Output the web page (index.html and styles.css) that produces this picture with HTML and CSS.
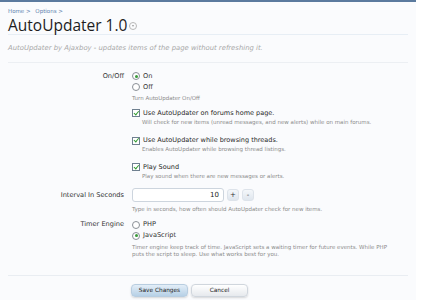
FILE: index.html
```html
<!DOCTYPE html>
<html lang="en">
<head>
    <meta charset="UTF-8">
    <title>AutoUpdater 1.0</title>
    <link rel="stylesheet" href="styles.css">
</head>
<body>
    <div class="page">
        <div class="topbar"></div>
        <div class="content">
            <div class="breadcrumb">
                <span>Home &gt;</span>
                <span>Options &gt;</span>
            </div>
            <h1>AutoUpdater 1.0<span class="menu-arrow"></span></h1>
            <p class="description">AutoUpdater by Ajaxboy - updates items of the page without refreshing it.</p>

            <form class="options">
                <div class="row first-row">
                    <div class="row-label">On/Off</div>
                    <div class="row-controls">
                        <label class="choice"><span class="radio checked"></span>On</label>
                        <label class="choice"><span class="radio"></span>Off</label>
                        <p class="hint">Turn AutoUpdater On/Off</p>
                        <label class="check-choice c1"><span class="checkbox"></span>Use AutoUpdater on forums home page.</label>
                        <p class="hint indent">Will check for new items (unread messages, and new alerts) while on main forums.</p>
                        <label class="check-choice c2"><span class="checkbox"></span>Use AutoUpdater while browsing threads.</label>
                        <p class="hint indent">Enables AutoUpdater while browsing thread listings.</p>
                        <label class="check-choice c3"><span class="checkbox"></span>Play Sound</label>
                        <p class="hint indent">Play sound when there are new messages or alerts.</p>
                    </div>
                </div>

                <div class="row interval-row">
                    <div class="row-label">Interval In Seconds</div>
                    <div class="row-controls">
                        <div class="spinner">
                            <div class="number-box">10</div>
                            <button type="button" class="spin-btn">+</button>
                            <button type="button" class="spin-btn">-</button>
                        </div>
                        <p class="hint">Type in seconds, how often should AutoUpdater check for new items.</p>
                    </div>
                </div>

                <div class="row timer-row">
                    <div class="row-label">Timer Engine</div>
                    <div class="row-controls">
                        <label class="choice"><span class="radio"></span>PHP</label>
                        <label class="choice"><span class="radio checked"></span>JavaScript</label>
                        <p class="hint">Timer engine keep track of time. JavaScript sets a waiting timer for future events. While PHP puts the script to sleep. Use what works best for you.</p>
                    </div>
                </div>

                <div class="submit-row">
                    <button type="button" class="btn primary">Save Changes</button>
                    <button type="button" class="btn">Cancel</button>
                </div>
            </form>
        </div>
    </div>
</body>
</html>
```

FILE: styles.css
```css
body {
    margin: 0;
    background: #ffffff;
    font-family: "DejaVu Sans", Verdana, sans-serif;
    color: #333;
}
.page {
    width: 416px;
    height: 300px;
    background: #fafbfd;
}
.topbar {
    height: 2px;
    background: #5b7a9e;
}
.content {
    padding: 0 8px;
}
.breadcrumb {
    padding-top: 5px;
    height: 8px;
    font-size: 5.5px;
    line-height: 8px;
    color: #5d82ae;
}
.breadcrumb span {
    margin-right: 3px;
}
h1 {
    margin: 1px 0 0;
    padding: 0;
    height: 18px;
    font-family: "Open Sans", "Liberation Sans", sans-serif;
    font-weight: normal;
    font-size: 15.5px;
    line-height: 18px;
    color: #1d1d1d;
    border-bottom: 1px solid #e7eef5;
}
.menu-arrow {
    display: inline-block;
    width: 6px;
    height: 6px;
    margin-left: 2px;
    border: 1px solid #b8b8b8;
    border-radius: 50%;
    position: relative;
    vertical-align: 1px;
}
.menu-arrow::after {
    content: "";
    position: absolute;
    left: 1.5px;
    top: 2px;
    border-left: 1.5px solid transparent;
    border-right: 1.5px solid transparent;
    border-top: 2px solid #9a9a9a;
}
.description {
    margin: 0;
    padding: 8.5px 0 10.5px;
    font-size: 6.85px;
    line-height: 8px;
    font-style: italic;
    color: #a9a9a9;
    border-bottom: 1px solid #eceff3;
}
.options {
    margin: 0;
}
.row {
    display: grid;
    grid-template-columns: 116px 1fr;
    column-gap: 8px;
}
.row-label {
    text-align: right;
    font-size: 6.6px;
    line-height: 11px;
    color: #333;
}
.row-controls {
    display: flex;
    flex-direction: column;
    align-items: flex-start;
}
.first-row {
    padding-top: 7.5px;
}
.choice {
    display: flex;
    align-items: center;
    height: 11px;
    font-size: 6.6px;
    line-height: 11px;
    color: #333;
}
.check-choice {
    display: flex;
    align-items: center;
    height: 9px;
    font-size: 6.5px;
    line-height: 9px;
    color: #1f1f1f;
}
.c1 {
    margin-top: 6.5px;
}
.c2 {
    margin-top: 10.5px;
}
.c3 {
    margin-top: 9.5px;
}
.radio {
    width: 6px;
    height: 6px;
    border: 1px solid #8a8f96;
    border-radius: 50%;
    margin-right: 3px;
    background: #fff;
    display: flex;
    align-items: center;
    justify-content: center;
}
.radio.checked::after {
    content: "";
    width: 3px;
    height: 3px;
    border-radius: 50%;
    background: #3a9a3a;
}
.checkbox {
    width: 6px;
    height: 6px;
    border: 1px solid #6f8090;
    margin-right: 3px;
    background: #fff;
    position: relative;
}
.checkbox::after {
    content: "";
    position: absolute;
    left: 1.6px;
    top: -0.5px;
    width: 1.8px;
    height: 3.6px;
    border-right: 1.2px solid #2f9a2f;
    border-bottom: 1.2px solid #2f9a2f;
    transform: rotate(40deg);
}
.hint {
    margin: 0;
    font-size: 5.5px;
    line-height: 8px;
    color: #8c8c8c;
}
.hint.indent {
    padding-left: 10px;
}
.first-row .choice + .hint {
    margin-top: 1.5px;
}
.interval-row {
    margin-top: 8px;
}
.interval-row .row-label {
    line-height: 14px;
}
.spinner {
    display: flex;
    align-items: center;
    height: 14px;
}
.number-box {
    width: 86px;
    height: 12px;
    line-height: 12px;
    border: 1px solid #cdd5de;
    border-radius: 3px;
    background: #fff;
    text-align: right;
    padding-right: 4px;
    font-size: 7px;
    color: #222;
}
.spin-btn {
    width: 12px;
    height: 12px;
    margin-left: 3px;
    padding: 0;
    border: 1px solid #dde3ea;
    border-radius: 3px;
    background: linear-gradient(#f4f7fa, #dfe6ee);
    font-family: "DejaVu Sans", sans-serif;
    font-size: 7px;
    line-height: 10px;
    color: #333;
}
.interval-row .hint {
    margin-top: 3px;
}
.timer-row {
    margin-top: 6.5px;
}
.timer-row .hint {
    margin-top: 2.5px;
    max-width: 268px;
    line-height: 7px;
}
.submit-row {
    margin-top: 17.5px;
    padding: 7.5px 0 0 123px;
    border-top: 1px solid #e9edf2;
    display: flex;
    gap: 3px;
}
.btn {
    width: 57px;
    height: 13px;
    padding: 0;
    border: 1px solid #d0d6dd;
    border-radius: 4px;
    background: linear-gradient(#ffffff, #e6e9ed);
    box-shadow: 0 1px 2px rgba(0, 0, 0, 0.15);
    font-family: "DejaVu Sans", sans-serif;
    font-size: 5.8px;
    color: #222;
}
.btn.primary {
    background: linear-gradient(#e3eef8, #b6d0e6);
    border-color: #b8cde0;
}
```
